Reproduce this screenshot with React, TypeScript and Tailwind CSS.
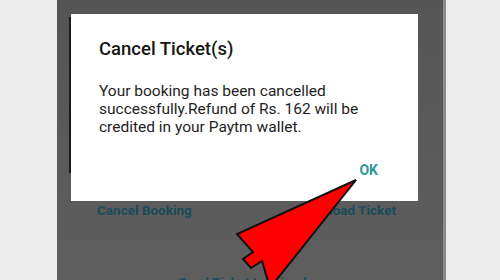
import React from "react";

const App = () => {
  return (
    <div
      className="relative flex w-[500px] h-[280px] overflow-hidden bg-[#ececec]"
      style={{ fontFamily: "Roboto, 'Noto Sans', sans-serif" }}
    >
      <div className="w-[57px] shrink-0 bg-[#ececec]" />

      {/* phone screen behind the dialog */}
      <div className="flex w-[386px] shrink-0 flex-col bg-gradient-to-b from-[#555555] to-[#5e5e5e] pl-[12px] pt-[14px]">
        <div className="flex">
          <div className="mt-[3px] h-[156px] w-[2px] bg-[#1a1a1a]" />
          <div className="flex h-[187px] w-[347px] flex-col bg-white pl-[28px] pr-[40px] pt-[23px]">
            <h2 className="text-[18.5px] leading-[24px] font-medium text-[#161616]">
              Cancel Ticket(s)
            </h2>
            <p className="mt-[21px] text-[15.5px] leading-[18px] text-[#1e1e1e]">
              Your booking has been cancelled
              <br />
              successfully.Refund of Rs. 162 will be
              <br />
              credited in your Paytm wallet.
            </p>
            <div className="mt-[24px] flex justify-end">
              <button className="text-[14px] leading-[20px] font-bold text-[#2a9a93]">
                OK
              </button>
            </div>
          </div>
        </div>

        <div className="mt-[1px] flex justify-between pl-[28px] pr-[47px] text-[13.5px] leading-[16px] font-bold text-[#1b4a5a]">
          <span>Cancel Booking</span>
          <span>Download Ticket</span>
        </div>
        <div className="mt-[56px] pl-[109px] text-[13.5px] leading-[16px] font-bold text-[#1b4a5a]">
          Send Ticket to Friends
        </div>
      </div>

      <div className="w-[3px] shrink-0 bg-[#8a8a8a]" />
      <div className="flex-1 bg-[#ececec]" />

      {/* red pointer arrow */}
      <svg
        className="pointer-events-none absolute left-0 top-0"
        width="500"
        height="280"
        viewBox="0 0 500 280"
      >
        <polygon
          points="356,180 237,234 253,252 243,259 251,268 262,261 270,288"
          fill="#ff0000"
          stroke="#111111"
          strokeWidth="2"
          strokeLinejoin="miter"
        />
      </svg>
    </div>
  );
};

export default App;
